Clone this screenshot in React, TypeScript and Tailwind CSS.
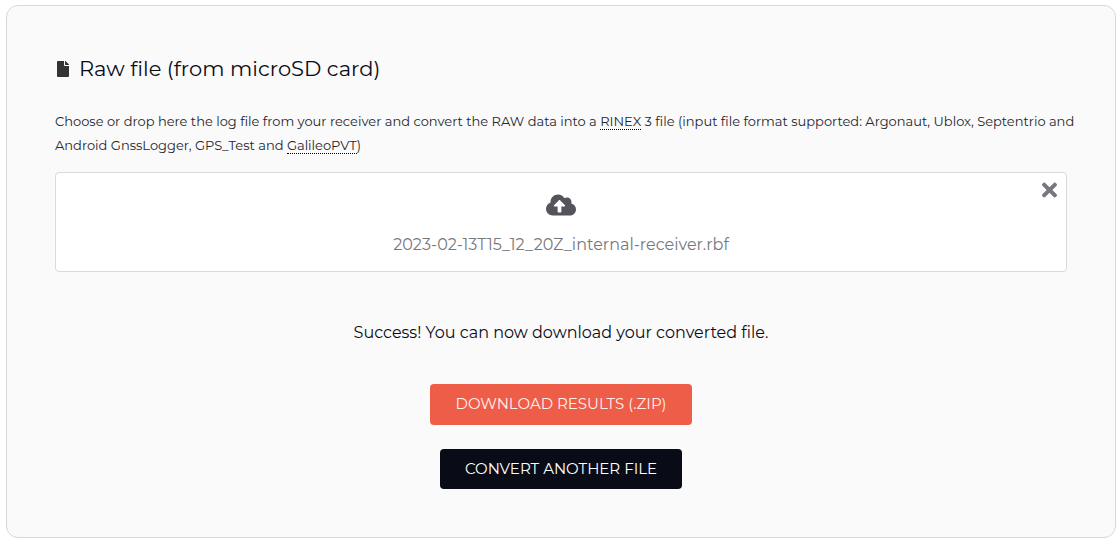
import { FaCloudUploadAlt, FaFile, FaTimes } from "react-icons/fa";

const fontStack = "font-[Montserrat,Inter,sans-serif]";

function DropZone({ fileName }: { fileName: string }) {
  return (
    <div className="relative mt-[15px] rounded border border-[#d9dadf] bg-white">
      <label className="flex h-[98px] cursor-pointer flex-col items-center pt-5">
        <FaCloudUploadAlt className="h-6 w-[30px] text-[#54545c]" aria-hidden="true" />
        <span className="mt-4 text-base leading-6 text-[#77787d]">{fileName}</span>
        <input type="file" className="sr-only" />
      </label>
      <button type="button" aria-label="Remove file" className="absolute top-1.5 right-[9px] text-[#77787d]">
        <FaTimes className="h-[22px] w-[15px]" aria-hidden="true" />
      </button>
    </div>
  );
}

export default function App() {
  return (
    <main className={`${fontStack} mt-[5px] mr-0.5 mb-2 ml-1.5 rounded-xl border border-[#d8d8d8] bg-[#fafafa] px-12 pt-[47px] pb-12 text-[#090c17]`}>
      <h1 className="flex items-center gap-2 text-[21px] leading-8">
        <FaFile className="h-4 w-4 text-[#333333]" aria-hidden="true" />
        Raw file (from microSD card)
      </h1>
      <p className="mt-6 -mr-4 text-[13px] leading-6 text-[#25262c]">
        Choose or drop here the log file from your receiver and convert the RAW data into a{" "}
        <a href="#rinex" className="border-b border-dotted border-black">RINEX</a> 3 file (input file format
        supported: Argonaut, Ublox, Septentrio and Android GnssLogger, GPS_Test and{" "}
        <a href="#galileopvt" className="border-b border-dotted border-black">GalileoPVT</a>)
      </p>
      <DropZone fileName="2023-02-13T15_12_20Z_internal-receiver.rbf" />
      <p className="mt-12 text-center text-base leading-[26px]">
        Success! You can now download your converted file.
      </p>
      <div className="mt-[38px] flex flex-col items-center gap-6">
        <button type="button" className="h-[41px] rounded bg-[#ee5d47] px-[26px] text-[15px] text-[#fff0ee]">
          DOWNLOAD RESULTS (.ZIP)
        </button>
        <button type="button" className="h-10 rounded bg-[#090c17] px-[25px] text-[15px] text-white">
          CONVERT ANOTHER FILE
        </button>
      </div>
    </main>
  );
}
